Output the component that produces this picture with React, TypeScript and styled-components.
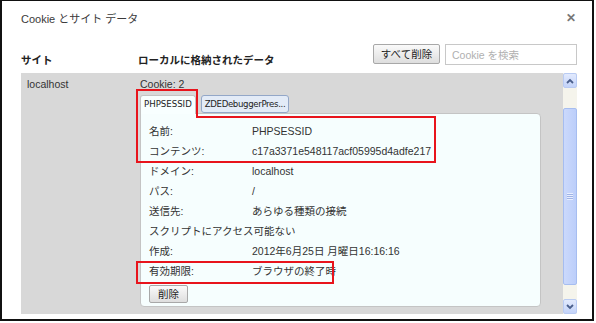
import React from "react";
import styled, { createGlobalStyle } from "styled-components";

const GlobalStyle = createGlobalStyle`
  html, body {
    margin: 0;
    padding: 0;
    background: #fff;
  }
  body {
    font-family: "Liberation Sans", "Noto Sans CJK JP", sans-serif;
    font-size: 10.5px;
    color: #333;
  }
`;

const Page = styled.div`
  position: relative;
  width: 596px;
  height: 323px;
  background: #fff;
`;

const Frame = styled.div`
  box-sizing: border-box;
  width: 594px;
  height: 321px;
  border: 2px solid #111;
  border-top-width: 1px;
  padding: 0 15px 0 19px;
  display: flex;
  flex-direction: column;
  background: #fff;
`;

const TitleBar = styled.div`
  height: 32px;
  display: flex;
  align-items: center;
  justify-content: space-between;
`;

const Title = styled.div`
  font-size: 11px;
  color: #3a3a3a;
  padding-top: 2px;
`;

const Close = styled.div`
  font-size: 12px;
  font-weight: bold;
  color: #777;
  padding-top: 2px;
  margin-right: 1px;
`;

const HeaderRow = styled.div`
  margin-top: 11px;
  height: 21px;
  display: flex;
  align-items: flex-start;
`;

const Heading = styled.div<{ $width?: number }>`
  ${(p) => (p.$width ? `width: ${p.$width}px;` : "flex: 1;")}
  font-weight: bold;
  color: #222;
  line-height: 14px;
  padding-top: 9px;
`;

const GrayButton = styled.button`
  box-sizing: border-box;
  height: 20px;
  padding: 0;
  border: 1px solid #a8a8a8;
  border-radius: 2px;
  background: linear-gradient(#fafafa, #dedede);
  font-family: "Liberation Sans", "Noto Sans CJK JP", sans-serif;
  font-size: 10.5px;
  color: #222;
  line-height: 18px;
  white-space: nowrap;
`;

const RemoveAll = styled(GrayButton)`
  width: 67px;
  margin-right: 5px;
`;

const SearchInput = styled.input`
  box-sizing: border-box;
  width: 132px;
  height: 21px;
  border: 1px solid #c8c8c8;
  padding: 0 6px;
  font-family: "Liberation Sans", "Noto Sans CJK JP", sans-serif;
  font-size: 10.5px;
  outline: none;
  &::placeholder {
    color: #b0b0b0;
  }
`;

const ListArea = styled.div`
  margin-top: 8px;
  height: 241px;
  display: flex;
`;

const ListContent = styled.div`
  flex: 1;
  background: #d8d8d8;
  display: flex;
  padding: 4px 0 0 6px;
`;

const SiteName = styled.div`
  width: 113px;
  line-height: 14px;
  color: #333;
`;

const DataColumn = styled.div`
  width: 401px;
  display: flex;
  flex-direction: column;
`;

const CookieCount = styled.div`
  line-height: 14px;
  color: #333;
`;

const Tabs = styled.div`
  margin-top: 4px;
  display: flex;
  align-items: flex-start;
  gap: 5px;
  position: relative;
  z-index: 1;
  margin-bottom: -1px;
`;

const Tab = styled.div<{ $active?: boolean }>`
  box-sizing: border-box;
  height: ${(p) => (p.$active ? 19 : 18)}px;
  padding: 0 3px;
  font-family: "DejaVu Sans", Verdana, sans-serif;
  font-size: 8.6px;
  line-height: 17px;
  color: #222;
  border: 1px solid ${(p) => (p.$active ? "#c4c4c4" : "#93a7c8")};
  border-bottom: ${(p) => (p.$active ? "none" : "1px solid #93a7c8")};
  border-radius: ${(p) => (p.$active ? "3px 3px 0 0" : "3px")};
  background: ${(p) => (p.$active ? "#f8ffff" : "#e3ebf7")};
  letter-spacing: ${(p) => (p.$active ? "0" : "-0.35px")};
`;

const Panel = styled.div`
  box-sizing: border-box;
  height: 194px;
  background: #f6fefe;
  border: 1px solid #c4c4c4;
  border-radius: 0 4px 4px 4px;
  padding: 7px 8px 4px;
`;

const Rows = styled.div`
  display: grid;
  grid-template-columns: 103px 1fr;
`;

const Cell = styled.div<{ $span?: boolean }>`
  line-height: 20px;
  height: 20px;
  color: #333;
  white-space: nowrap;
  ${(p) => (p.$span ? "grid-column: 1 / 3;" : "")}
`;

const DeleteButton = styled(GrayButton)`
  margin-top: 4px;
  width: 39px;
  height: 18px;
  line-height: 16px;
`;

const Scrollbar = styled.div`
  width: 14px;
  background: #f5f4ec;
  display: flex;
  flex-direction: column;
`;

const ScrollButton = styled.div`
  box-sizing: border-box;
  height: 15px;
  border: 1px solid #b9cbf3;
  border-radius: 2px;
  background: linear-gradient(#e2eafd, #c3d3f9);
  display: flex;
  align-items: center;
  justify-content: center;
`;

const Thumb = styled.div`
  box-sizing: border-box;
  margin: 20px 0 14px;
  height: 177px;
  border: 1px solid #a6bdf0;
  border-radius: 2px;
  background: linear-gradient(90deg, #cbd9fc, #bccefa);
  display: flex;
  align-items: center;
  justify-content: center;
`;

const Grip = styled.div`
  width: 6px;
  height: 7px;
  background: repeating-linear-gradient(#e8eefe 0 1px, #9fb3e6 1px 2px);
`;

const Overlay = styled.svg`
  position: absolute;
  left: 0;
  top: 0;
  pointer-events: none;
`;

const Chevron = ({ up }: { up?: boolean }) => (
  <svg width="8" height="6" viewBox="0 0 8 6">
    <path
      d={up ? "M1 5 L4 2 L7 5" : "M1 1 L4 4 L7 1"}
      fill="none"
      stroke="#4a5f8c"
      strokeWidth="1.8"
    />
  </svg>
);

const rows: [string, string][] = [
  ["名前:", "PHPSESSID"],
  ["コンテンツ:", "c17a3371e548117acf05995d4adfe217"],
  ["ドメイン:", "localhost"],
  ["パス:", "/"],
  ["送信先:", "あらゆる種類の接続"],
];

const rows2: [string, string][] = [
  ["作成:", "2012年6月25日 月曜日16:16:16"],
  ["有効期限:", "ブラウザの終了時"],
];

export default function App() {
  return (
    <Page>
      <GlobalStyle />
      <Frame>
        <TitleBar>
          <Title>Cookie とサイト データ</Title>
          <Close>✕</Close>
        </TitleBar>
        <HeaderRow>
          <Heading $width={117}>サイト</Heading>
          <Heading>ローカルに格納されたデータ</Heading>
          <RemoveAll>すべて削除</RemoveAll>
          <SearchInput placeholder="Cookie を検索" />
        </HeaderRow>
        <ListArea>
          <ListContent>
            <SiteName>localhost</SiteName>
            <DataColumn>
              <CookieCount>Cookie: 2</CookieCount>
              <Tabs>
                <Tab $active>PHPSESSID</Tab>
                <Tab>ZDEDebuggerPres...</Tab>
              </Tabs>
              <Panel>
                <Rows>
                  {rows.map(([k, v]) => (
                    <React.Fragment key={k}>
                      <Cell>{k}</Cell>
                      <Cell>{v}</Cell>
                    </React.Fragment>
                  ))}
                  <Cell $span>スクリプトにアクセス可能ない</Cell>
                  {rows2.map(([k, v]) => (
                    <React.Fragment key={k}>
                      <Cell>{k}</Cell>
                      <Cell>{v}</Cell>
                    </React.Fragment>
                  ))}
                </Rows>
                <DeleteButton>削除</DeleteButton>
              </Panel>
            </DataColumn>
          </ListContent>
          <Scrollbar>
            <ScrollButton>
              <Chevron up />
            </ScrollButton>
            <Thumb>
              <Grip />
            </Thumb>
            <ScrollButton>
              <Chevron />
            </ScrollButton>
          </Scrollbar>
        </ListArea>
      </Frame>
      <Overlay width="596" height="323">
        <polygon
          points="137,90 197,90 197,117 435,117 435,162 137,162"
          fill="none"
          stroke="#e8141c"
          strokeWidth="2"
        />
        <rect x="137" y="262" width="196" height="21" fill="none" stroke="#e8141c" strokeWidth="2" />
      </Overlay>
    </Page>
  );
}
